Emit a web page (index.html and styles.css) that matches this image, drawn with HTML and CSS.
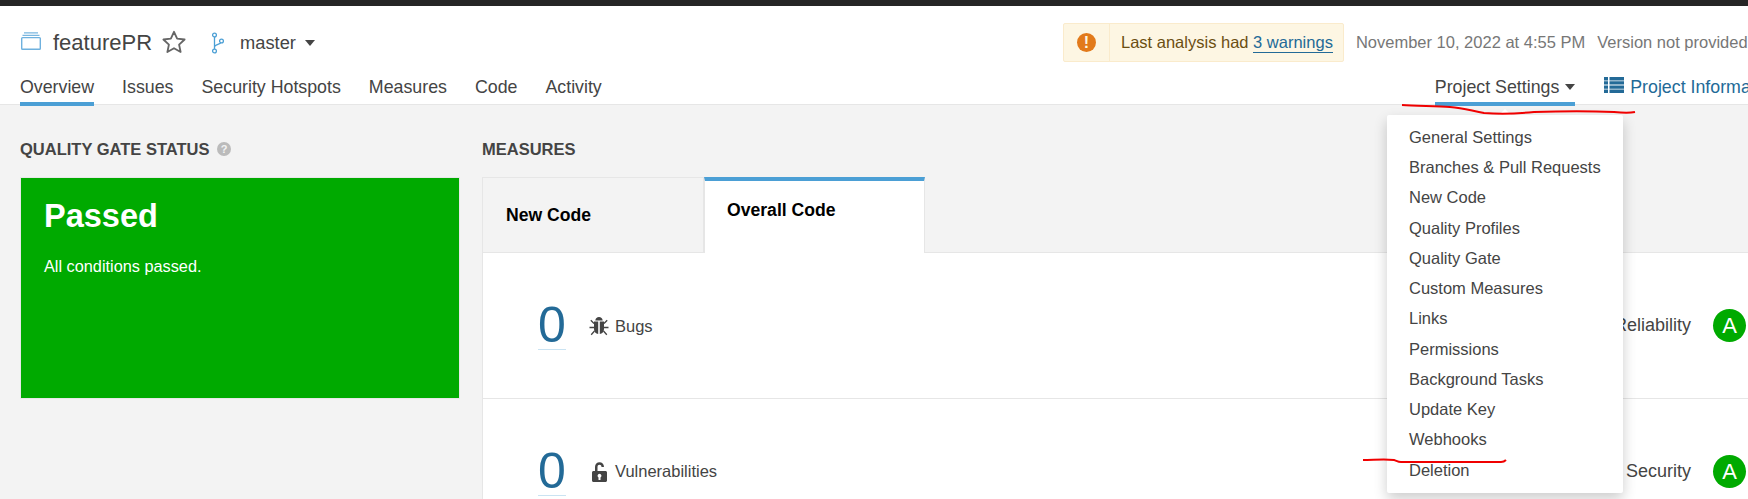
FILE: index.html
```html
<!DOCTYPE html>
<html lang="en">

<head>
    <meta charset="UTF-8">
    <meta name="viewport" content="width=device-width, initial-scale=1.0">
    <title>featurePR - Overview</title>
    <link rel="stylesheet" href="styles.css">
</head>

<body>
    <div class="topbar"></div>

    <header class="header">
        <div class="project-row">
            <div class="project-left">
                <svg class="project-icon" viewBox="0 0 20 18">
                    <path d="M3 .8h14M1.500 3.300h17" fill="none" stroke="#7ab6e0" stroke-width="1.2" />
                    <rect x="0.7" y="5.6" width="18.6" height="11.7" rx="0.8" fill="none" stroke="#6fb1de" stroke-width="1.4" />
                </svg>
                <span class="project-name">featurePR</span>
                <svg class="star-icon" viewBox="0 0 24 24">
                    <path d="M12 2.600l2.900 6.300 6.900.8-5.100 4.700 1.400 6.800-6.100-3.400-6.100 3.400 1.400-6.800-5.100-4.700 6.900-.8z" fill="none" stroke="#666" stroke-width="1.700" stroke-linejoin="round" />
                </svg>
                <svg class="branch-icon" viewBox="0 0 14 22">
                    <g fill="none" stroke="#4b9fd5" stroke-width="1.300">
                        <circle cx="3.500" cy="3" r="1.900" />
                        <circle cx="3.500" cy="19" r="1.900" />
                        <circle cx="10.500" cy="9" r="1.900" />
                        <path d="M3.500 4.900v12.200M3.500 15c0-2.500 5.500-2.500 6.300-4.300" />
                    </g>
                </svg>
                <span class="branch-name">master</span>
                <span class="caret caret-branch"></span>
            </div>
            <div class="warning-box">
                <div class="warning-icon-cell"><span class="warning-icon">!</span></div>
                <div class="warning-text">Last analysis had <a class="warning-link">3 warnings</a></div>
            </div>
            <span class="analysis-date">November 10, 2022 at 4:55 PM</span>
            <span class="analysis-version">Version not provided</span>
        </div>

        <nav class="nav-row">
            <a class="nav-link active">Overview</a>
            <a class="nav-link">Issues</a>
            <a class="nav-link">Security Hotspots</a>
            <a class="nav-link">Measures</a>
            <a class="nav-link">Code</a>
            <a class="nav-link">Activity</a>
            <a class="nav-link active settings-link">Project Settings<span class="caret caret-settings"></span></a>
            <a class="nav-link info-link">
                <svg class="list-icon" viewBox="0 0 20 16">
                    <path d="M0 0h4v3.400H0zM5.500 0H20v3.400H5.500zM0 4.200h4v3.400H0zM5.500 4.200H20v3.400H5.500zM0 8.400h4v3.400H0zM5.500 8.400H20v3.400H5.500zM0 12.600h4V16H0zM5.500 12.600H20V16H5.500z" fill="#236a97" />
                </svg>
                Project Information
            </a>
        </nav>
    </header>

    <main class="main">
        <section class="gate">
            <h3 class="section-title">QUALITY GATE STATUS
                <span class="help-icon">?</span>
            </h3>
            <div class="gate-box">
                <div class="gate-status">Passed</div>
                <div class="gate-note">All conditions passed.</div>
            </div>
        </section>

        <section class="measures">
            <h3 class="section-title">MEASURES</h3>
            <div class="code-tabs">
                <div class="code-tab">New Code</div>
                <div class="code-tab selected">Overall Code</div>
            </div>
            <div class="measure-card">
                <div class="measure-row">
                    <span class="measure-value">0</span>
                    <svg class="measure-icon bug-icon" viewBox="0 0 20 20">
                        <path d="M6.300 4.600C6.500 2.300 8 1 10 1s3.500 1.300 3.700 3.600zM5 5.600h4.200V18C6.800 17.800 5 15.800 5 13zM10.800 5.600H15V13c0 2.800-1.800 4.800-4.200 5z" fill="#444" />
                        <path d="M5 7.500L1.800 4.300M5 11.500H.5M5.500 15l-3.300 3.700M15 7.500l3.200-3.200M15 11.500h4.500M14.500 15l3.300 3.700" fill="none" stroke="#444" stroke-width="1.300" />
                    </svg>
                    <span class="measure-label">Bugs</span>
                    <span class="rating-label">Reliability</span>
                    <span class="rating">A</span>
                </div>
                <div class="measure-row">
                    <span class="measure-value">0</span>
                    <svg class="measure-icon lock-icon" viewBox="0 0 15 20">
                        <path fill-rule="evenodd" d="M1.500 9H3V5C3 2.200 5 .2 7.500.2S12 2.200 12 5H9.500C9.500 3.600 8.700 2.700 7.500 2.700S5.500 3.600 5.500 5v4h8c.8 0 1.500.7 1.500 1.500v8c0 .8-.7 1.500-1.500 1.500h-12C.7 20 0 19.300 0 18.500v-8C0 9.700.7 9 1.500 9zm6 2.800a2 2 0 0 0-1 3.700V18h2v-2.500a2 2 0 0 0-1-3.700z" fill="#444" />
                    </svg>
                    <span class="measure-label">Vulnerabilities</span>
                    <span class="rating-label">Security</span>
                    <span class="rating">A</span>
                </div>
            </div>
        </section>
    </main>

    <!-- dropdown of Project Settings -->
    <div class="settings-menu">
        <a class="menu-item">General Settings</a>
        <a class="menu-item">Branches &amp; Pull Requests</a>
        <a class="menu-item">New Code</a>
        <a class="menu-item">Quality Profiles</a>
        <a class="menu-item">Quality Gate</a>
        <a class="menu-item">Custom Measures</a>
        <a class="menu-item">Links</a>
        <a class="menu-item">Permissions</a>
        <a class="menu-item">Background Tasks</a>
        <a class="menu-item">Update Key</a>
        <a class="menu-item">Webhooks</a>
        <a class="menu-item">Deletion</a>
    </div>

    <!-- red pen marks drawn on top of the screenshot -->
    <svg class="pen-marks" viewBox="0 0 1748 499">
        <path d="M1402 105c14 1 34 1 48 2 14 1 22 4 34 6 14 1 30 1 50-1 26-1 60-1 80 0 10 1 16 1 21 0" />
        <path d="M1363 460c10 0 22-1 31 0 3 1 4 2 7 2 30 0 62 0 100 0 3 0 4-1 5-2" />
    </svg>
</body>

</html>
```

FILE: styles.css
```css
html,
body {
    height: 499px;
    overflow: hidden;
}

body {
    margin: 0;
    font-family: "Liberation Sans", Arial, sans-serif;
    font-size: 16.5px;
    color: #444;
    background-color: #f3f3f3;
}

a {
    color: inherit;
    text-decoration: none;
}

.topbar {
    height: 6px;
    background-color: #262626;
}

/* header */
.header {
    height: 98px;
    padding-left: 20px;
    background-color: #fff;
    border-bottom: 1px solid #e6e6e6;
}

.project-row {
    display: flex;
    align-items: center;
    height: 39px;
    padding-top: 17px;
    white-space: nowrap;
}

.project-left {
    display: flex;
    align-items: center;
    width: 1043px;
    flex: none;
}

.project-icon {
    width: 20px;
    height: 18px;
    margin-left: 1px;
    margin-bottom: 4px;
}

.project-name {
    margin-left: 12px;
    font-size: 22px;
}

.star-icon {
    width: 26px;
    height: 26px;
    margin-left: 9px;
    margin-bottom: 2px;
}

.branch-icon {
    width: 14px;
    height: 22px;
    margin-left: 24px;
}

.branch-name {
    margin-left: 15px;
    font-size: 18.3px;
}

.caret {
    display: inline-block;
    border-left: 5px solid transparent;
    border-right: 5px solid transparent;
    border-top: 6px solid #444;
}

.caret-branch {
    margin-left: 9px;
}

.caret-settings {
    margin-left: 6px;
    vertical-align: 3px;
}

.warning-box {
    display: flex;
    flex: none;
    height: 37px;
    background-color: #fdf6e3;
    border: 1px solid #faebcc;
    border-radius: 2px;
    color: #6b4e12;
}

.warning-icon-cell {
    display: flex;
    align-items: center;
    justify-content: center;
    width: 45px;
    border-right: 1px solid #faebcc;
}

.warning-icon {
    width: 19px;
    height: 19px;
    border-radius: 50%;
    background-color: #e27a1b;
    color: #fdf6e3;
    font-size: 16px;
    font-weight: bold;
    line-height: 19px;
    text-align: center;
}

.warning-text {
    padding: 0 10px 0 11px;
    line-height: 37px;
}

.warning-link {
    color: #236a97;
    border-bottom: 1px solid #236a97;
    padding-bottom: 1px;
}

.analysis-date {
    margin-left: 12px;
    color: #777;
}

.analysis-version {
    margin-left: 12px;
    color: #777;
}

.nav-row {
    display: flex;
    margin-top: 14px;
    font-size: 17.8px;
    white-space: nowrap;
}

.nav-link {
    margin-right: 28px;
    padding-bottom: 4px;
    border-bottom: 4px solid transparent;
    line-height: 22px;
}

.nav-link.active {
    border-bottom-color: #4b9fd5;
}

.settings-link {
    margin-left: 805px;
    margin-right: 29px;
}

.info-link {
    color: #236a97;
    margin-right: 0;
}

.list-icon {
    width: 20px;
    height: 16px;
    margin-right: 1px;
}

/* main area */
.main {
    display: flex;
    box-sizing: border-box;
    height: 394px;
    padding: 34px 0 0 20px;
    overflow: hidden;
}

.section-title {
    height: 20px;
    margin: 0 0 18px;
    font-size: 16.5px;
    font-weight: bold;
    line-height: 20px;
    white-space: nowrap;
}

.help-icon {
    display: inline-block;
    width: 14px;
    height: 14px;
    margin-left: 3px;
    border-radius: 50%;
    background-color: #bbb;
    color: #f3f3f3;
    font-size: 11px;
    line-height: 14px;
    text-align: center;
    vertical-align: 2px;
}

.gate {
    width: 440px;
    flex: none;
}

.gate-box {
    width: 415px;
    height: 220px;
    padding-left: 23px;
    background-color: #00aa00;
    border: 1px solid #e8e8e8;
    color: #fff;
}

.gate-status {
    margin-top: 19px;
    font-size: 32.5px;
    font-weight: bold;
    line-height: 38px;
}

.gate-note {
    margin-top: 21px;
    font-size: 16.3px;
    line-height: 20px;
}

.measures {
    flex: none;
    width: 1266px;
    margin-left: 22px;
}

.code-tabs {
    display: flex;
}

.code-tab {
    box-sizing: border-box;
    width: 222px;
    height: 75px;
    padding-left: 23px;
    background-color: #f3f3f3;
    border: 1px solid #e6e6e6;
    border-bottom: none;
    color: #000;
    font-size: 17.6px;
    font-weight: bold;
    line-height: 74px;
}

.code-tab.selected {
    position: relative;
    width: 221px;
    height: 76px;
    margin-bottom: -1px;
    padding-left: 22px;
    background-color: #fff;
    border-top: 4px solid #4b9fd5;
    line-height: 58px;
}

.measure-card {
    background-color: #fff;
    border-top: 1px solid #e6e6e6;
    border-left: 1px solid #e6e6e6;
}

.measure-row {
    display: flex;
    align-items: center;
    height: 145px;
    padding: 0 2px 0 55px;
    border-bottom: 1px solid #e6e6e6;
}

.measure-value {
    width: 28px;
    border-bottom: 1px solid #cae3f2;
    color: #236a97;
    font-size: 50px;
    line-height: 48px;
    text-align: center;
}

.measure-icon {
    flex: none;
}

.bug-icon {
    width: 20px;
    height: 20px;
    margin-left: 23px;
    margin-right: 2px;
}

.lock-icon {
    width: 15px;
    height: 20px;
    margin-left: 26px;
    margin-right: 3px;
}

.measure-label {
    margin-left: 5px;
}

.bug-icon + .measure-label {
    margin-top: 2px;
    margin-left: 4px;
}

.rating-label {
    margin-left: auto;
    font-size: 18px;
}

.rating {
    width: 33px;
    height: 33px;
    margin-left: 22px;
    border-radius: 50%;
    background-color: #00aa00;
    color: #fff;
    font-size: 22px;
    line-height: 33px;
    text-align: center;
}

/* overlays */
.settings-menu {
    position: absolute;
    top: 115px;
    left: 1387px;
    width: 236px;
    height: 378px;
    box-sizing: border-box;
    padding: 6.9px 0;
    background-color: #fff;
    border-radius: 2px;
    box-shadow: 0 6px 14px rgba(0, 0, 0, 0.2);
}

/* small arrow of the open menu */
.settings-menu::before {
    content: "";
    position: absolute;
    top: -6px;
    left: 112px;
    border-left: 6px solid transparent;
    border-right: 6px solid transparent;
    border-bottom: 6px solid #fff;
}

.menu-item {
    display: block;
    padding-left: 22px;
    line-height: 30.25px;
    white-space: nowrap;
}

.pen-marks {
    position: absolute;
    top: 0;
    left: 0;
    width: 1748px;
    height: 499px;
    fill: none;
    stroke: #f00000;
    stroke-width: 2px;
    pointer-events: none;
}
```
